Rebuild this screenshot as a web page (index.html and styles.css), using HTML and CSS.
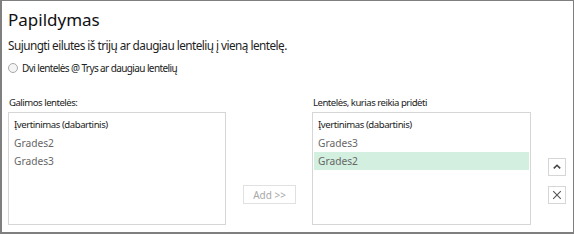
FILE: index.html
```html
<!DOCTYPE html>
<html lang="lt">
<head>
  <meta charset="UTF-8">
  <title>Papildymas</title>
  <link rel="stylesheet" href="styles.css">
</head>
<body>
  <div class="dialog">
    <h1 class="title">Papildymas</h1>
    <p class="lead">Sujungti eilutes iš trijų ar daugiau lentelių į vieną lentelę.</p>
    <label class="radio"><span class="radio-dot"></span>Dvi lentelės @ Trys ar daugiau lentelių</label>

    <div class="tables">
      <div class="pane">
        <div class="pane-label">Galimos lentelės:</div>
        <ul class="listbox">
          <li class="current">Įvertinimas (dabartinis)</li>
          <li>Grades2</li>
          <li>Grades3</li>
        </ul>
      </div>

      <div class="middle">
        <button class="btn-add" disabled>Add &gt;&gt;</button>
      </div>

      <div class="pane">
        <div class="pane-label">Lentelės, kurias reikia pridėti</div>
        <ul class="listbox">
          <li class="current">Įvertinimas (dabartinis)</li>
          <li>Grades3</li>
          <li class="selected">Grades2</li>
        </ul>
      </div>

      <div class="side">
        <button class="icon-btn" title="Aukštyn">
          <svg width="10" height="10" viewBox="0 0 10 10"><path d="M1.8 6.4 L5 3.3 L8.2 6.4" fill="none" stroke="#444" stroke-width="1.6"/></svg>
        </button>
        <button class="icon-btn" title="Pašalinti">
          <svg width="10" height="10" viewBox="0 0 10 10"><path d="M1.2 1.2 L8.8 8.8 M8.8 1.2 L1.2 8.8" fill="none" stroke="#555" stroke-width="1.1"/></svg>
        </button>
      </div>
    </div>
  </div>
</body>
</html>
```

FILE: styles.css
```css
body { margin: 0; background: #fff; font-family: "Segoe UI", "Noto Sans", sans-serif; color: #222; }
.dialog { width: 574px; height: 234px; box-sizing: border-box; border: 1px solid #7f7f7f; border-left-width: 2px; border-bottom-width: 2px; padding: 0 0 0 6px; overflow: hidden; }
.title { font-size: 17px; font-weight: normal; margin: 8px 0 0; line-height: 22px; color: #111; }
.lead { font-size: 11.8px; letter-spacing: -0.55px; margin: 6px 0 0; line-height: 16px; color: #1e1e1e; }
.radio { display: flex; align-items: center; gap: 4px; margin-top: 8px; font-size: 10px; line-height: 14px; letter-spacing: -0.6px; color: #222; }
.radio-dot { width: 8px; height: 8px; border: 1px solid #a8a8a8; border-radius: 50%; background: #f4f4f4; }
.tables { display: grid; grid-template-columns: 218px 53px 218px 18px; column-gap: 17px; margin-top: 21px; }
.tables > .pane:nth-child(3) { margin-left: -1px; }
.pane-label { font-size: 9.6px; line-height: 14px; letter-spacing: -0.5px; color: #222; margin-bottom: 2px; padding-left: 1px; }
.listbox { list-style: none; margin: 0; padding: 3px 1px 2px; height: 113px; box-sizing: border-box; border: 1px solid #d6d6d6; }
.listbox li { height: 18px; line-height: 18px; padding-left: 4px; font-size: 10.2px; color: #666; }
.listbox li.current { font-size: 9.6px; color: #222; letter-spacing: -0.45px; }
.listbox li.selected { background: #d3efdf; }
.middle { display: flex; align-items: flex-end; padding-bottom: 21px; }
.btn-add { width: 53px; height: 19px; padding: 0; background: #fff; border: 1px solid #e1e1e1; color: #a8a8a8; font-family: inherit; font-size: 10px; }
.side { display: flex; flex-direction: column; justify-content: flex-end; gap: 10px; padding-bottom: 21px; }
.icon-btn { width: 18px; height: 18px; padding: 0; background: #fff; border: 1px solid #d6d6d6; display: flex; align-items: center; justify-content: center; }
```
